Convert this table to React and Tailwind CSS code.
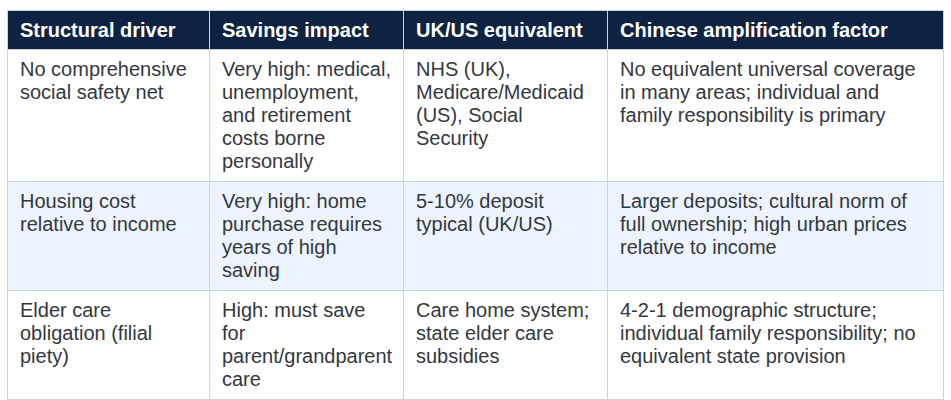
const ROWS = [
  {
    driver: "No comprehensive social safety net",
    impact: "Very high: medical, unemployment, and retirement costs borne personally",
    equiv: "NHS (UK), Medicare/Medicaid (US), Social Security",
    factor: "No equivalent universal coverage in many areas; individual and family responsibility is primary",
  },
  {
    driver: "Housing cost relative to income",
    impact: "Very high: home purchase requires years of high saving",
    equiv: "5-10% deposit typical (UK/US)",
    factor: "Larger deposits; cultural norm of full ownership; high urban prices relative to income",
    shaded: true,
  },
  {
    driver: "Elder care obligation (filial piety)",
    impact: "High: must save for parent/grandparent care",
    equiv: "Care home system; state elder care subsidies",
    factor: "4-2-1 demographic structure; individual family responsibility; no equivalent state provision",
  },
];

const HEADERS = [
  { label: "Structural driver", w: "w-[202px]" },
  { label: "Savings impact", w: "w-[194px]" },
  { label: "UK/US equivalent", w: "w-[204px]" },
  { label: "Chinese amplification factor", w: "w-[336px]" },
];

export default function App() {
  return (
    <div className="bg-white w-[951px] h-[400px] pl-[7px] pt-[10px] font-['Liberation_Sans',Arial,sans-serif]">
      <table className="table-fixed w-[936px] border-collapse text-[20px] leading-[23px]">
        <thead>
          <tr className="bg-[#0e2341] text-white">
            {HEADERS.map((h) => (
              <th
                key={h.label}
                className={`${h.w} border border-[#cfd4dc] px-[12px] pt-[8px] pb-[7px] text-left font-bold`}
              >
                {h.label}
              </th>
            ))}
          </tr>
        </thead>
        <tbody className="text-[#333840]">
          {ROWS.map((r) => (
            <tr key={r.driver} className={r.shaded ? "bg-[#edf4fe]" : "bg-white"}>
              {[r.driver, r.impact, r.equiv, r.factor].map((t, i) => (
                <td key={i} className="border border-[#cfd4dc] px-[12px] pt-[8px] pb-[8px] align-top">
                  {t}
                </td>
              ))}
            </tr>
          ))}
        </tbody>
      </table>
    </div>
  );
}
